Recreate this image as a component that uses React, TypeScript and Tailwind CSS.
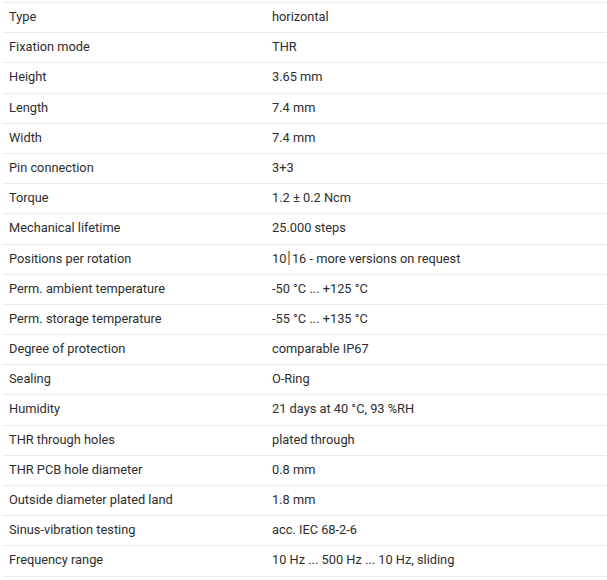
import React from "react";

const rows: [string, React.ReactNode][] = [
  ["Type", "horizontal"],
  ["Fixation mode", "THR"],
  ["Height", "3.65 mm"],
  ["Length", "7.4 mm"],
  ["Width", "7.4 mm"],
  ["Pin connection", "3+3"],
  ["Torque", "1.2 ± 0.2 Ncm"],
  ["Mechanical lifetime", "25.000 steps"],
  [
    "Positions per rotation",
    <>
      10<span className="mx-[2px] inline-block h-[14px] w-[1.5px] translate-y-[2px] bg-[#c8964b]" />16 - more versions on request
    </>,
  ],
  ["Perm. ambient temperature", "-50 °C ... +125 °C"],
  ["Perm. storage temperature", "-55 °C ... +135 °C"],
  ["Degree of protection", "comparable IP67"],
  ["Sealing", "O-Ring"],
  ["Humidity", "21 days at 40 °C, 93 %RH"],
  ["THR through holes", "plated through"],
  ["THR PCB hole diameter", "0.8 mm"],
  ["Outside diameter plated land", "1.8 mm"],
  ["Sinus-vibration testing", "acc. IEC 68-2-6"],
  ["Frequency range", "10 Hz ... 500 Hz ... 10 Hz, sliding"],
];

export default function App() {
  return (
    <div
      className="w-[607px] h-[580px] bg-white pl-[3px] pt-[2px] text-[12.8px] text-[#2e2e2e]"
      style={{ fontFamily: 'Roboto, "Liberation Sans", sans-serif' }}
    >
      <div className="border-b border-[#ebebeb]">
        {rows.map(([k, v], i) => (
          <div
            key={i}
            className="grid h-[30.2px] grid-cols-[263px_1fr] items-center border-t border-[#ebebeb] pb-[2px]"
          >
            <div className="pl-[6px]">{k}</div>
            <div className="pl-[6px]">{v}</div>
          </div>
        ))}
      </div>
    </div>
  );
}
